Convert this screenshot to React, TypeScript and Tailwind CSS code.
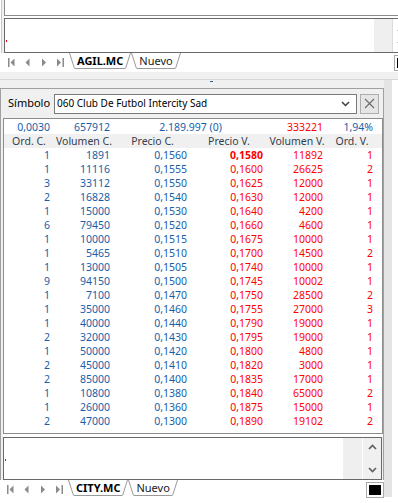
import React from 'react'

type Row = [string, string, string, string, string, string]

const rows: Row[] = [
  ['1', '1891', '0,1560', '0,1580', '11892', '1'],
  ['1', '11116', '0,1555', '0,1600', '26625', '2'],
  ['3', '33112', '0,1550', '0,1625', '12000', '1'],
  ['2', '16828', '0,1540', '0,1630', '12000', '1'],
  ['1', '15000', '0,1530', '0,1640', '4200', '1'],
  ['6', '79450', '0,1520', '0,1660', '4600', '1'],
  ['1', '10000', '0,1515', '0,1675', '10000', '1'],
  ['1', '5465', '0,1510', '0,1700', '14500', '2'],
  ['1', '13000', '0,1505', '0,1740', '10000', '1'],
  ['9', '94150', '0,1500', '0,1745', '10002', '1'],
  ['1', '7100', '0,1470', '0,1750', '28500', '2'],
  ['1', '35000', '0,1460', '0,1755', '27000', '3'],
  ['1', '40000', '0,1440', '0,1790', '19000', '1'],
  ['2', '32000', '0,1430', '0,1795', '19000', '1'],
  ['1', '50000', '0,1420', '0,1800', '4800', '1'],
  ['2', '45000', '0,1410', '0,1820', '3000', '1'],
  ['2', '85000', '0,1400', '0,1835', '17000', '1'],
  ['1', '10800', '0,1380', '0,1840', '65000', '2'],
  ['1', '26000', '0,1360', '0,1875', '15000', '1'],
  ['2', '47000', '0,1300', '0,1890', '19102', '2'],
]

const headers = ['Ord. C.', 'Volumen C.', 'Precio C.', 'Precio V.', 'Volumen V.', 'Ord. V.']

function Chevron({ up }: { up?: boolean }) {
  return (
    <svg width="9" height="6" viewBox="0 0 9 6" className="shrink-0">
      <path
        d={up ? 'M1 5L4.5 1.5L8 5' : 'M1 1L4.5 4.5L8 1'}
        fill="none"
        stroke="#606060"
        strokeWidth="1.7"
      />
    </svg>
  )
}

function NavArrows() {
  return (
    <svg width="56" height="9" viewBox="0 0 56 9" className="mt-[5px] shrink-0">
      <g fill="#8a8a8a">
        <rect x="0" y="0" width="1.5" height="9" />
        <path d="M6.5 0.5L2.5 4.5L6.5 8.5Z" />
        <path d="M21.5 0.5L17.5 4.5L21.5 8.5Z" />
        <path d="M34 0.5L38 4.5L34 8.5Z" />
        <path d="M49 0.5L53 4.5L49 8.5Z" />
        <rect x="54.5" y="0" width="1.5" height="9" />
      </g>
    </svg>
  )
}

function Tab({ label, active }: { label: string; active?: boolean }) {
  return (
    <div className="flex h-[16px] shrink-0 bg-white">
      <svg width="6" height="16" viewBox="0 0 6 16">
        <path d="M0.5 0L5.5 15.5" stroke="#9a9a9a" fill="none" />
      </svg>
      <div
        className={`h-[16px] border-b border-[#9a9a9a] px-[2px] text-[11px] leading-[15px] ${
          active ? 'font-bold text-black' : 'text-[#202020]'
        }`}
      >
        {label}
      </div>
      <svg width="6" height="16" viewBox="0 0 6 16">
        <path d="M0.5 15.5L5.5 0" stroke="#9a9a9a" fill="none" />
      </svg>
    </div>
  )
}

function TabBar({ active }: { active: string }) {
  return (
    <div className="flex h-[19px] items-start bg-white pl-[7px]">
      <NavArrows />
      <div className="ml-[5px] flex">
        <Tab label={active} active />
        <Tab label="Nuevo" />
      </div>
      <div className="ml-auto mt-[2px] h-[16px] w-[18px] border border-[#a8a8a8] bg-white p-[2px]">
        <div className="h-full w-full bg-black" />
      </div>
    </div>
  )
}

function Caret() {
  return <div className="ml-px mt-[21px] h-[2px] w-px bg-[#e00000]" />
}

export default function App() {
  return (
    <div className="relative h-[503px] w-[398px] overflow-hidden bg-white font-['Noto_Sans',sans-serif] text-[10.5px]">
      {/* upper window, wider than the screen */}
      <div className="ml-px w-[411px]">
        <div className="border-l border-[#c8c8c8] bg-[#f0f0f0] pl-[2px]">
          <div className="h-[16px] border-x border-b border-[#8c8c8c] bg-white" />
          <div className="h-[2px] bg-white" />
          <div className="flex h-[35px] border border-[#696969] bg-white">
            <div className="w-[369px]">
              <Caret />
            </div>
            <div className="w-[18px] bg-[#efefef]" />
            <div className="w-px bg-[#dcdcdc]" />
            <div className="flex w-[17px] flex-col items-center gap-[9px] bg-white pt-[7px]">
              <Chevron up />
              <Chevron />
            </div>
          </div>
        </div>
        <TabBar active="AGIL.MC" />
      </div>

      <div className="h-[7px] bg-[#f0f0f0]" />
      <div className="h-px bg-[#d6d6d6]" />

      <div className="flex">
        <div className="w-[384px] shrink-0">
          <div className="relative h-[8px] bg-[#f0f0f0]">
            <div className="absolute left-[210px] top-px h-px w-[3px] bg-[#34598a]" />
          </div>

          {/* lower window */}
          <div className="border-l border-r border-t border-[#a0a0a0] bg-[#f0f0f0] pl-[2px]">
            <div className="flex h-[29px] items-center">
              <div className="w-[51px] pl-[5px] text-[11px] text-black">Símbolo</div>
              <div className="flex h-[20px] w-[303px] items-center border border-[#7a7a7a] bg-white pl-[2px] pr-[6px]">
                <span className="text-[10px] text-black">060 Club De Futbol Intercity Sad</span>
                <span className="ml-auto">
                  <svg width="9" height="6" viewBox="0 0 9 6">
                    <path d="M1 1L4.5 4.5L8 1" fill="none" stroke="#3c3c3c" strokeWidth="1.5" />
                  </svg>
                </span>
              </div>
              <div className="ml-[3px] flex h-[20px] w-[19px] items-center justify-center border border-[#adadad] bg-[#e5e5e5]">
                <svg width="11" height="11" viewBox="0 0 11 11">
                  <path d="M1 1L10 10M10 1L1 10" stroke="#6a6a6a" strokeWidth="1.1" />
                </svg>
              </div>
            </div>

            <div className="h-[316px] w-[380px] border border-[#8c8c8c] bg-white">
              <div className="grid h-[15px] grid-cols-[50px_60px_77px_76px_60px_50px] items-center leading-[14px] text-[#175ea9]">
                <div className="pr-[4px] text-right">0,0030</div>
                <div className="pr-[4px] text-right">657912</div>
                <div className="col-span-2 text-center">2.189.997 (0)</div>
                <div className="pr-[4px] text-right text-[#ff0000]">333221</div>
                <div className="pr-[4px] text-right">1,94%</div>
              </div>
              <div className="grid h-[14px] grid-cols-[50px_60px_77px_76px_60px_50px] bg-[#f0f0f0] leading-[14px] text-[#34404e]">
                {headers.map((h) => (
                  <div key={h} className="text-center">
                    {h}
                  </div>
                ))}
              </div>
              {rows.map((r, i) => (
                <div
                  key={i}
                  className="grid h-[14px] grid-cols-[50px_60px_77px_76px_60px_50px] leading-[14px]"
                >
                  <div className="pr-[4px] text-right text-[#175ea9]">{r[0]}</div>
                  <div className="pr-[4px] text-right text-[#175ea9]">{r[1]}</div>
                  <div className="pr-[4px] text-right text-[#175ea9]">{r[2]}</div>
                  <div className={`pr-[4px] text-right text-[#ff0000] ${i === 0 ? 'font-bold' : ''}`}>{r[3]}</div>
                  <div className="pr-[4px] text-right text-[#ff0000]">{r[4]}</div>
                  <div className="pr-[4px] text-right text-[#ff0000]">{r[5]}</div>
                </div>
              ))}
            </div>

            <div className="h-[3px] w-[380px] bg-white" />

            <div className="flex h-[43px] w-[379px] border border-[#696969] bg-white">
              <div className="flex-1">
                <Caret />
              </div>
              <div className="w-[19px] bg-[#efefef]" />
              <div className="w-px bg-white" />
              <div className="flex w-[18px] flex-col items-center justify-between bg-[#f0f0f0] pb-[6px] pt-[6px]">
                <Chevron up />
                <Chevron />
              </div>
            </div>
          </div>

          <TabBar active="CITY.MC" />
        </div>
        <div className="h-[417px] w-[8px] shrink-0 bg-[#e4e4e4]" />
      </div>
    </div>
  )
}
